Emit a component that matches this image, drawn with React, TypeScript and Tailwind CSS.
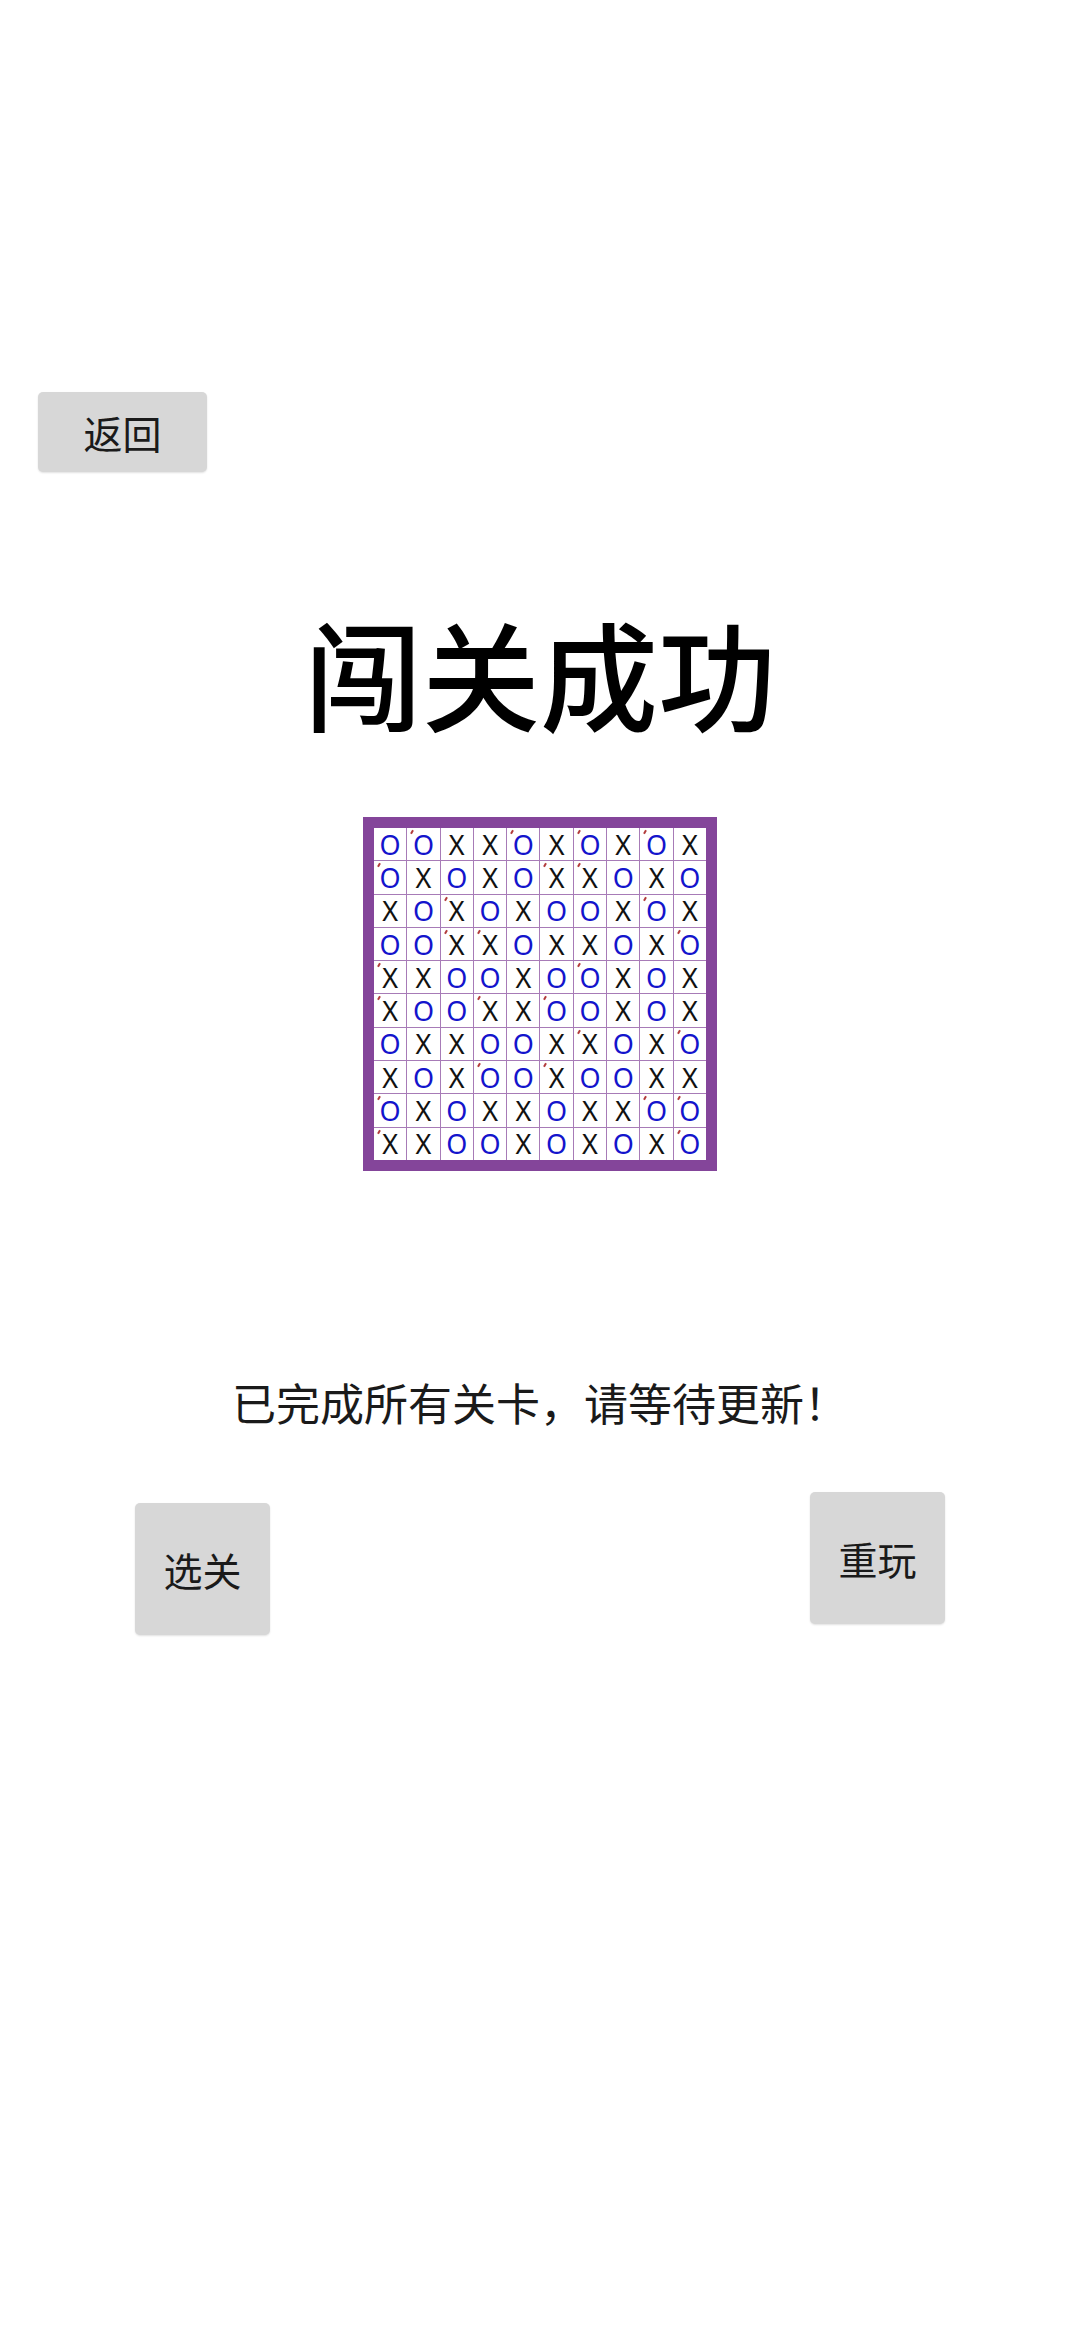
import React from 'react';

const board = [
  'OOXXOXOXOX',
  'OXOXOXXOXO',
  'XOXOXOOXOX',
  'OOXXOXXOXO',
  'XXOOXOOXOX',
  'XOOXXOOXOX',
  'OXXOOXXOXO',
  'XOXOOXOOXX',
  'OXOXXOXXOO',
  'XXOOXOXOXO',
];

// cells with the little red tick in the top-left corner (row, col)
const ticks = new Set([
  '0-1', '0-4', '0-6', '0-8',
  '1-0', '1-5', '1-6',
  '2-2', '2-8',
  '3-2', '3-3', '3-9',
  '4-0', '4-6',
  '5-0', '5-3', '5-5',
  '6-6', '6-9',
  '7-3', '7-5',
  '8-0', '8-8', '8-9',
  '9-0', '9-9',
]);

const cjk = { fontFamily: '"Noto Sans CJK SC", "Noto Sans", sans-serif' };

function GrayButton({ label, className }: { label: string; className: string }) {
  return (
    <button
      className={`bg-[#d7d7d7] rounded-[5px] text-[39px] text-[#1a1a1a] flex items-center justify-center shadow-[0_1px_2px_rgba(0,0,0,0.12)] ${className}`}
      style={cjk}
    >
      {label}
    </button>
  );
}

function Board() {
  return (
    <div className="w-[354px] h-[354px] border-[11px] border-[#84459a] bg-[#a77bb7] grid grid-cols-10 grid-rows-10 gap-px">
      {board.map((row, r) =>
        row.split('').map((ch, c) => (
          <div key={`${r}-${c}`} className="relative bg-white flex items-center justify-center">
            {ticks.has(`${r}-${c}`) && (
              <span className="absolute left-[4px] top-[2px] w-[2px] h-[4px] bg-[#b23a3a] rotate-[30deg]" />
            )}
            <span
              className={`text-[27px] leading-none ${ch === 'O' ? 'text-[#1414cc]' : 'text-[#111]'}`}
              style={{ fontFamily: '"Noto Sans", Roboto, sans-serif' }}
            >
              {ch}
            </span>
          </div>
        ))
      )}
    </div>
  );
}

export default function App() {
  return (
    <div className="w-[1080px] min-h-[2340px] bg-white flex flex-col pt-[392px]" style={cjk}>
      <GrayButton label="返回" className="ml-[38px] w-[169px] h-[80px]" />

      <div className="mt-[135px] h-[130px] flex items-center justify-center">
        <h1 className="text-[118px] leading-none text-black font-medium">闯关成功</h1>
      </div>

      <div className="mt-[80px] flex justify-center">
        <Board />
      </div>

      <div className="mt-[178px] h-[105px] flex items-center justify-center">
        <p className="text-[44px] leading-none text-[#1a1a1a]">已完成所有关卡，请等待更新！</p>
      </div>

      <div className="mt-[38px] flex items-start">
        <GrayButton label="选关" className="ml-[135px] mt-[11px] w-[135px] h-[132px]" />
        <GrayButton label="重玩" className="ml-[540px] w-[135px] h-[132px]" />
      </div>
    </div>
  );
}
